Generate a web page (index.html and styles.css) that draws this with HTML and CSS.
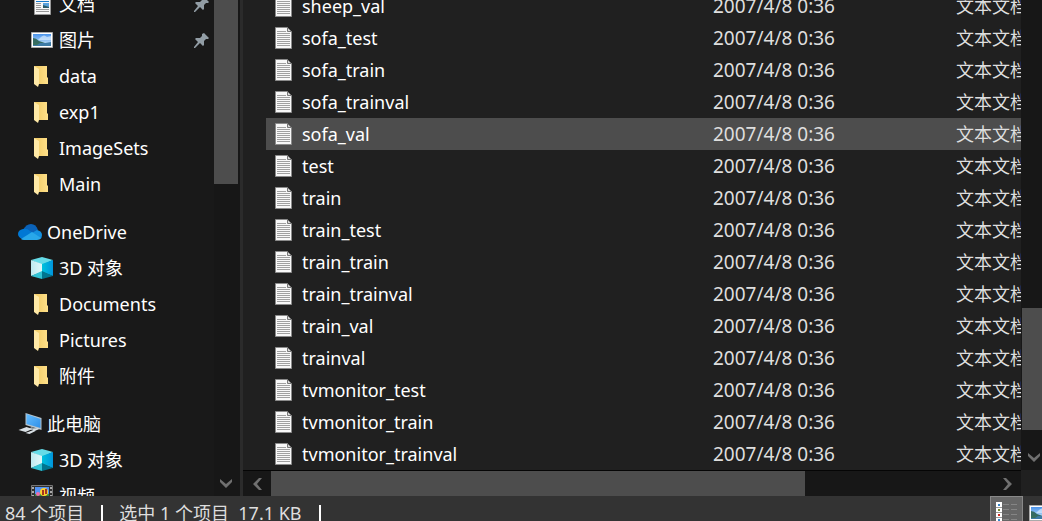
FILE: index.html
```
<!DOCTYPE html>
<html lang="zh-CN">
<head>
  <meta charset="UTF-8" />
  <meta name="viewport" content="width=device-width, initial-scale=1.0" />
  <title>Main</title>
  <link rel="stylesheet" href="styles.css">
</head>
<body>
  <svg class="sprite" aria-hidden="true">
    <defs>
      <linearGradient id="folder-back" x1="0" x2="1"><stop offset="0" stop-color="#f0c961" /><stop offset="1" stop-color="#ffe08a" /></linearGradient>
      <linearGradient id="sky" x1="0" y1="0" x2="0" y2="1"><stop offset="0" stop-color="#4a93ea" /><stop offset="1" stop-color="#d5ecfa" /></linearGradient>
      <linearGradient id="screen" x1="0" y1="0" x2="1" y2="1"><stop offset="0" stop-color="#64bdff" /><stop offset="1" stop-color="#2f8fe8" /></linearGradient>
      <linearGradient id="cube-left" x1="0" x2="1"><stop offset="0" stop-color="#bdeaf0" /><stop offset="1" stop-color="#e2f7f9" /></linearGradient>
      <linearGradient id="cube-right" x1="0" x2="1"><stop offset="0" stop-color="#00c3dc" /><stop offset="1" stop-color="#0094dc" /></linearGradient>
    </defs>
    <symbol id="i-text" viewBox="0 0 17 22">
      <path fill="#f8f8f8" stroke="#8b8b8b" d="M.5.5h12l4 4v17H.5z" />
      <path fill="#d8d8d8" stroke="#777" d="M12.5.5v4h4z" />
      <path stroke="#a0a0a0" d="M2 4.5h9M2 6.5h13M2 8.5h13M2 10.5h13M2 12.5h13M2 14.5h13M2 16.5h13M2 18.5h13" />
    </symbol>
    <symbol id="i-doc" viewBox="0 0 17 22">
      <path fill="#f8f8f8" stroke="#999" d="M.5.5h16v21H.5z" />
      <path stroke="#1979c9" d="M2 8.5h13" />
      <path stroke="#999" d="M2 10.5h5M2 12.5h5M2 14.5h5M2 16.5h13M2 18.5h13" />
      <path fill="#5ba2dc" d="M9 10h6v5H9z" />
      <path fill="#2c5c68" d="M9 12l3 1 3 1v1H9z" />
    </symbol>
    <symbol id="i-picture" viewBox="0 0 22 16">
      <path fill="#fff" stroke="#aaa" d="M.5.5h21v15H.5z" />
      <path fill="url(#sky)" d="M2 2h18v12H2z" />
      <path fill="#e8f5ff" d="M10 5q3-3 6 0l4-1v4H7z" opacity=".6" />
      <path fill="#356b62" d="M2 6q3 0 6 3l6 2H2z" />
      <path fill="#3d7aa5" d="M2 11h12l6-1v4H2z" />
      <path fill="#39705e" d="M2 11h7l-3 2H2z" />
    </symbol>
    <symbol id="i-folder" viewBox="0 0 14 21" preserveAspectRatio="xMinYMin">
      <path fill="url(#folder-back)" d="M0 0h13v11l1 1v6H4z" />
      <path fill="#ffe9a6" d="M0 0l5 3v15l-1 3-4-3z" />
    </symbol>
    <symbol id="i-cloud" viewBox="0 0 24 16">
      <path fill="#0a62b8" d="M5 6Q8 0 13 0q5 0 7 6l-6 5z" />
      <path fill="#0078d4" d="M5 5q4-1 7 2l3 2-11 6Q0 13 0 10q0-4 5-5z" />
      <path fill="#1490df" d="M14 9l5-3q5 1 5 5 0 3-2 4z" />
      <path fill="#28a8ea" d="M3 15l11-7 9 6q-1 2-4 2H6q-2 0-3-1z" />
    </symbol>
    <symbol id="i-cube" viewBox="0 0 22 22">
      <path fill="#65dbe7" d="M0 3l11-3 11 3-11 5z" />
      <path fill="url(#cube-left)" d="M0 3l11 4v8L0 19z" />
      <path fill="url(#cube-right)" d="M22 3L11 7v8l11 4z" />
      <path fill="#32c3d4" d="M0 19l11-5v8z" />
      <path fill="#00758f" d="M22 19l-11-5v8z" />
    </symbol>
    <symbol id="i-pc" viewBox="0 0 23 22">
      <path fill="#b8c4cc" d="M7 0l16 5v12L7 12z" />
      <path fill="url(#screen)" d="M8 1l14 5v9L8 11z" />
      <path fill="#8b969e" d="M13 14l6 2-3 2-6-2z" />
      <path fill="#d8dfe4" d="M0 17l8-3 6 2-7 3zM14 16l5-1 2 1-5 2zM7 20l8-3 2 1-6 3z" />
    </symbol>
    <symbol id="i-video" viewBox="0 0 22 22">
      <path fill="#303030" stroke="#777" d="M.5.5h21v21H.5z" />
      <path stroke="#aaa" stroke-width="2" stroke-dasharray="2 2" d="M2 2v18M20 2v18" />
      <path fill="#5292f3" d="M4 2h14v10H4z" />
      <path fill="#398b3e" d="M4 9h14v11H4z" />
      <circle fill="#ef6cab" cx="7" cy="9" r="2" />
      <circle fill="#ffd22b" cx="13" cy="7" r="4" />
      <path stroke="#a73724" stroke-width="2" d="M12 5v5M15 4v5" />
    </symbol>
    <symbol id="i-pin" viewBox="0 0 15 15">
      <path fill="#929da5" d="M10 0l5 5-1 1-2 0-2 2v4l-1 1-3-3-5 5-1-0 0-1 4-5-3-3 1-1h4l2-2V1z" />
    </symbol>
    <symbol id="i-down" viewBox="0 0 12 9"><path fill="#707070" d="M0 0l6 5 6-5v3L6 9 0 3z" /></symbol>
    <symbol id="i-left" viewBox="0 0 9 12"><path fill="#707070" d="M9 0L4 6l5 6H6L0 6l6-6z" /></symbol>
    <symbol id="i-right" viewBox="0 0 9 12"><path fill="#707070" d="M0 0l5 6-5 6h3l6-6-6-6z" /></symbol>
    <symbol id="i-details" viewBox="0 0 22 22">
      <path fill="#fff" d="M0 0h6v22H0z" />
      <path stroke="#999" d="M0 5.5h6M0 10.5h6M0 15.5h6" />
      <path fill="#3686c9" d="M2 2h2v2H2z" />
      <path fill="#7a8a28" d="M2 7h2v2H2z" />
      <path fill="#d12d20" d="M2 12h2v2H2z" />
      <path fill="#3686c9" d="M2 17h2v2H2z" />
      <path stroke="#858585" d="M7 2.5h6M15 2.5h6M7 7.5h6M15 7.5h6M7 12.5h6M15 12.5h6M7 17.5h6M15 17.5h6" />
    </symbol>
  </svg>

  <div class="explorer">
    <div class="panes">
      <nav class="sidebar">
        <div class="tree">
          <div class="group">
            <a class="item child" href="#"><span class="icon"><svg class="page"><use href="#i-doc" /></svg></span><span>文档</span><svg class="pin"><use href="#i-pin" /></svg></a>
            <a class="item child" href="#"><span class="icon"><svg class="picture"><use href="#i-picture" /></svg></span><span>图片</span><svg class="pin"><use href="#i-pin" /></svg></a>
            <a class="item child" href="#"><span class="icon"><svg class="folder"><use href="#i-folder" /></svg></span><span>data</span></a>
            <a class="item child" href="#"><span class="icon"><svg class="folder"><use href="#i-folder" /></svg></span><span>exp1</span></a>
            <a class="item child" href="#"><span class="icon"><svg class="folder"><use href="#i-folder" /></svg></span><span>ImageSets</span></a>
            <a class="item child" href="#"><span class="icon"><svg class="folder"><use href="#i-folder" /></svg></span><span>Main</span></a>
          </div>
          <div class="group">
            <a class="item" href="#"><span class="icon"><svg class="cloud"><use href="#i-cloud" /></svg></span><span>OneDrive</span></a>
            <a class="item child" href="#"><span class="icon"><svg class="cube"><use href="#i-cube" /></svg></span><span>3D 对象</span></a>
            <a class="item child" href="#"><span class="icon"><svg class="folder"><use href="#i-folder" /></svg></span><span>Documents</span></a>
            <a class="item child" href="#"><span class="icon"><svg class="folder"><use href="#i-folder" /></svg></span><span>Pictures</span></a>
            <a class="item child" href="#"><span class="icon"><svg class="folder"><use href="#i-folder" /></svg></span><span>附件</span></a>
          </div>
          <div class="group">
            <a class="item" href="#"><span class="icon"><svg class="pc"><use href="#i-pc" /></svg></span><span>此电脑</span></a>
            <a class="item child" href="#"><span class="icon"><svg class="cube"><use href="#i-cube" /></svg></span><span>3D 对象</span></a>
            <a class="item child" href="#"><span class="icon"><svg class="cube"><use href="#i-video" /></svg></span><span>视频</span></a>
          </div>
        </div>
        <div class="scroll-v nav-scroll">
          <div class="thumb"></div>
          <button class="arrow" aria-label="向下滚动"><svg class="chevron-down"><use href="#i-down" /></svg></button>
        </div>
      </nav>

      <main class="content">
        <div class="list">
          <table class="files">
            <colgroup><col class="col-name"><col class="col-date"><col class="col-type"></colgroup>
            <tbody>
              <tr><td><svg class="page"><use href="#i-text" /></svg>sheep_val</td><td>2007/4/8 0:36</td><td>文本文档</td></tr>
              <tr><td><svg class="page"><use href="#i-text" /></svg>sofa_test</td><td>2007/4/8 0:36</td><td>文本文档</td></tr>
              <tr><td><svg class="page"><use href="#i-text" /></svg>sofa_train</td><td>2007/4/8 0:36</td><td>文本文档</td></tr>
              <tr><td><svg class="page"><use href="#i-text" /></svg>sofa_trainval</td><td>2007/4/8 0:36</td><td>文本文档</td></tr>
              <tr class="selected"><td><svg class="page"><use href="#i-text" /></svg>sofa_val</td><td>2007/4/8 0:36</td><td>文本文档</td></tr>
              <tr><td><svg class="page"><use href="#i-text" /></svg>test</td><td>2007/4/8 0:36</td><td>文本文档</td></tr>
              <tr><td><svg class="page"><use href="#i-text" /></svg>train</td><td>2007/4/8 0:36</td><td>文本文档</td></tr>
              <tr><td><svg class="page"><use href="#i-text" /></svg>train_test</td><td>2007/4/8 0:36</td><td>文本文档</td></tr>
              <tr><td><svg class="page"><use href="#i-text" /></svg>train_train</td><td>2007/4/8 0:36</td><td>文本文档</td></tr>
              <tr><td><svg class="page"><use href="#i-text" /></svg>train_trainval</td><td>2007/4/8 0:36</td><td>文本文档</td></tr>
              <tr><td><svg class="page"><use href="#i-text" /></svg>train_val</td><td>2007/4/8 0:36</td><td>文本文档</td></tr>
              <tr><td><svg class="page"><use href="#i-text" /></svg>trainval</td><td>2007/4/8 0:36</td><td>文本文档</td></tr>
              <tr><td><svg class="page"><use href="#i-text" /></svg>tvmonitor_test</td><td>2007/4/8 0:36</td><td>文本文档</td></tr>
              <tr><td><svg class="page"><use href="#i-text" /></svg>tvmonitor_train</td><td>2007/4/8 0:36</td><td>文本文档</td></tr>
              <tr><td><svg class="page"><use href="#i-text" /></svg>tvmonitor_trainval</td><td>2007/4/8 0:36</td><td>文本文档</td></tr>
            </tbody>
          </table>
        </div>
        <div class="scroll-v list-scroll">
          <div class="thumb"></div>
          <button class="arrow" aria-label="向下滚动"><svg class="chevron-down"><use href="#i-down" /></svg></button>
        </div>
        <div class="scroll-h">
          <button class="arrow" aria-label="向左滚动"><svg class="chevron-side"><use href="#i-left" /></svg></button>
          <div class="track"><div class="thumb"></div></div>
          <button class="arrow" aria-label="向右滚动"><svg class="chevron-side"><use href="#i-right" /></svg></button>
        </div>
      </main>
    </div>

    <footer class="status">
      <span class="stat">84 个项目</span>
      <span class="stat">选中 1 个项目&nbsp; 17.1 KB</span>
      <div class="views">
        <button class="view active" aria-label="详细信息"><svg class="details"><use href="#i-details" /></svg></button>
        <button class="view" aria-label="大缩略图"><svg class="picture"><use href="#i-picture" /></svg></button>
      </div>
    </footer>
  </div>
</body>
</html>
```
FILE: styles.css
```
html, body {
  margin: 0;
  height: 100%;
  overflow: hidden;
  background: #202020;
  color: #fff;
  font-family: "Noto Sans", "Noto Sans CJK SC", sans-serif;
  font-size: 18px;
  line-height: 24px;
}

svg {
  display: block;
  flex: none;
}

button {
  display: flex;
  align-items: center;
  justify-content: center;
  padding: 0;
  border: none;
  background: none;
}

.sprite {
  position: absolute;
  width: 0;
  height: 0;
}

.explorer {
  display: flex;
  flex-direction: column;
  height: 100vh;
}

.panes {
  display: flex;
  flex: 1;
  min-height: 0;
}

/* navigation pane */
.sidebar {
  display: flex;
  flex: none;
  width: 240px;
  overflow: hidden;
  background: #191919;
  border-right: 3px solid #2b2b2b;
}

.tree {
  flex: 1;
  margin-top: -14px;
}

.group {
  margin-bottom: 12px;
}

.item {
  display: flex;
  align-items: center;
  height: 36px;
  padding: 0 5px 0 18px;
  color: #fff;
  text-decoration: none;
}

.item.child {
  padding-left: 30px;
}

.icon {
  display: flex;
  justify-content: center;
  width: 24px;
  margin-right: 5px;
}

.pin {
  width: 15px;
  height: 15px;
  margin-left: auto;
}

.page { width: 17px; height: 22px; }
.picture { width: 22px; height: 16px; }
.folder { width: 16px; height: 21px; }
.cloud { width: 24px; height: 16px; }
.cube { width: 22px; height: 22px; }
.pc { width: 24px; height: 22px; }
.details { width: 22px; height: 22px; }
.chevron-down { width: 12px; height: 9px; }
.chevron-side { width: 9px; height: 12px; }

/* scrollbars */
.scroll-v {
  display: flex;
  flex-direction: column;
  background: #171717;
}

.scroll-v .arrow {
  height: 26px;
  margin-top: auto;
}

.thumb {
  background: #4d4d4d;
}

.nav-scroll {
  width: 24px;
  padding-right: 2px;
}

.nav-scroll .thumb {
  height: 37%;
}

.list-scroll {
  padding-left: 1px;
}

.list-scroll .thumb {
  height: 26%;
  margin-top: auto;
}

.list-scroll .arrow {
  width: 24px;
  margin-top: 14px;
}

.scroll-h {
  display: flex;
  background: #171717;
  border-top: 1px solid #050505;
}

.scroll-h .arrow {
  width: 28px;
}

.track {
  display: flex;
  flex: 1;
}

.track .thumb {
  width: 74%;
}

/* file list */
.content {
  display: grid;
  flex: 1;
  grid-template-columns: 1fr 21px;
  grid-template-rows: 1fr 26px;
  min-width: 0;
}

.list {
  display: flex;
  flex-direction: column;
  justify-content: flex-end;
  min-width: 0;
  min-height: 0;
  padding-left: 23px;
  overflow: hidden;
}

.files {
  width: 100%;
  table-layout: fixed;
  border-collapse: collapse;
}

.col-name { width: 447px; }
.col-date { width: 243px; }

.files td {
  height: 32px;
  padding: 0;
  overflow: hidden;
  color: #dedede;
  white-space: nowrap;
}

.files td:first-child {
  display: flex;
  align-items: center;
  gap: 10px;
  padding-left: 9px;
  color: #fff;
}

.files td:nth-child(2) {
  font-size: 19px;
}

.selected {
  background: #4d4d4d;
}

/* status bar */
.status {
  display: flex;
  flex: none;
  height: 25px;
  overflow: hidden;
  background: #333;
  color: #dedede;
}

.stat {
  display: flex;
  align-items: center;
  height: 34px;
  padding-left: 5px;
}

.stat + .stat {
  padding-left: 16px;
}

.stat::after {
  content: "";
  width: 2px;
  height: 16px;
  margin-left: 17px;
  background: #fff;
}

.views {
  display: flex;
  margin-left: auto;
  margin-right: -14px;
}

.view {
  width: 33px;
  height: 34px;
}

.view.active {
  background: #666;
  border: 1px solid #888;
}
```
